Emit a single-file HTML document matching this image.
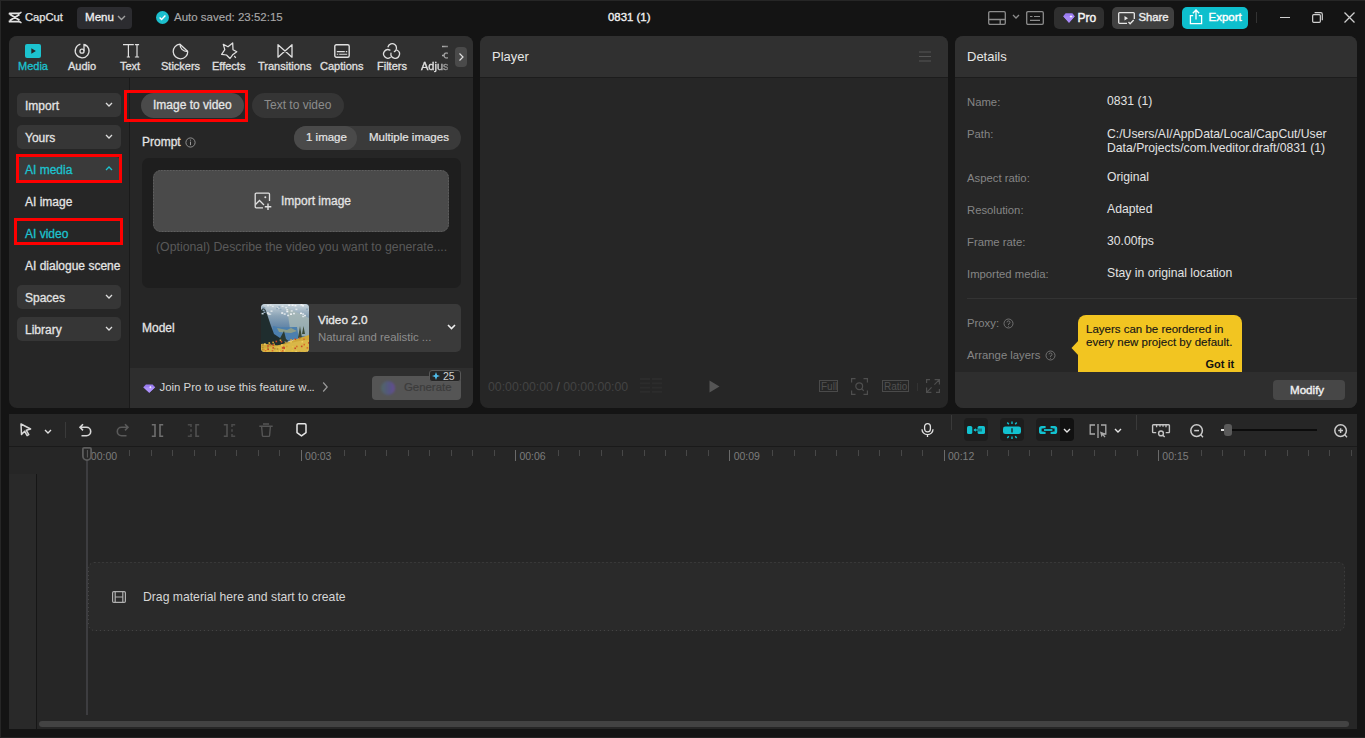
<!DOCTYPE html>
<html><head><meta charset="utf-8">
<style>
*{margin:0;padding:0;box-sizing:border-box}
html,body{width:1365px;height:738px;overflow:hidden;background:#141414;font-family:"Liberation Sans",sans-serif;color:#e6e6e6;font-size:12px}
.a{position:absolute}
.t{position:absolute;white-space:nowrap;line-height:1}
.panel{position:absolute;background:#262626;border-radius:8px;overflow:hidden}
.hdr{position:absolute;left:0;right:0;top:0;height:42px;background:#303030;border-bottom:1px solid #1c1c1c}
.btn{position:absolute;background:#363636;border-radius:5px}
.chev{position:absolute;width:5px;height:5px;border-right:1.5px solid #ddd;border-bottom:1.5px solid #ddd;transform:rotate(45deg)}
.red{position:absolute;border:3px solid #fe0000}
.lbl{color:#8a8a8a}
.sb{font-size:12px;color:#e4e4e4;-webkit-text-stroke:0.28px #e4e4e4}
.sb.on{color:#1cc3cf;-webkit-text-stroke:0.28px #1cc3cf}
.dl{font-size:11.3px;color:#858585}
.dv{font-size:12.2px;color:#e2e2e2}
.tab{font-size:11px;color:#e0e0e0;-webkit-text-stroke:0.3px #e0e0e0}
.tab.on{color:#1cc3cf;-webkit-text-stroke:0.3px #1cc3cf}
svg{position:absolute;overflow:visible}
</style></head><body>
<!-- window border -->
<div class="a" style="left:0;top:0;width:1365px;height:1px;background:#262626"></div>
<div class="a" style="left:0;top:0;width:1px;height:738px;background:#262626"></div>
<div class="a" style="left:0;top:737px;width:1365px;height:1px;background:#232323"></div>

<!-- ===== TOP BAR ===== -->
<div id="top">
  <!-- logo -->
  <svg style="left:8.3px;top:10.6px" width="15" height="13" viewBox="0 0 16 14">
    <path d="M1.6 3.8V2.5h10.8M1.6 10.2v1.3h10.8M1.9 3.6l10.4 6.4M12.3 3.8L1.9 10.2" fill="none" stroke="#e2e2e2" stroke-width="1.9" stroke-linejoin="round"/>
    <path d="M12.2 2.5c.8 0 1.3-.4 1.7-1M12.2 11.5c.8 0 1.3.4 1.7 1" fill="none" stroke="#e2e2e2" stroke-width="1.6" stroke-linecap="round"/>
  </svg>
  <div class="t" style="left:25px;top:11.6px;font-size:11.2px;color:#e4e4e4;-webkit-text-stroke:0.25px #e4e4e4;letter-spacing:0px">CapCut</div>
  <div class="btn" style="left:77px;top:7px;width:55px;height:22px;background:#2c2c30;border-radius:4px"></div>
  <div class="t" style="left:85px;top:11px;font-size:11.6px;color:#f0f0f0;-webkit-text-stroke:0.3px #f0f0f0">Menu</div>
  <svg style="left:117px;top:15px" width="9" height="6"><path d="M1 1l3.5 3.5L8 1" fill="none" stroke="#a0a0a0" stroke-width="1.4"/></svg>
  <!-- auto saved -->
  <div class="a" style="left:156px;top:11px;width:13px;height:13px;border-radius:50%;background:#1cbfcd"></div>
  <svg style="left:156px;top:11px" width="13" height="13"><path d="M3.6 6.6l2 2 3.8-4" fill="none" stroke="#fff" stroke-width="1.4"/></svg>
  <div class="t" style="left:174px;top:12.2px;font-size:11.5px;color:#a8a8a8;-webkit-text-stroke:0.15px #a8a8a8">Auto saved: 23:52:15</div>
  <div class="t" style="left:608px;top:12.2px;font-size:11.4px;color:#f0f0f0;-webkit-text-stroke:0.35px #f0f0f0">0831 (1)</div>
  <!-- top right -->
  <svg style="left:988px;top:11px" width="18" height="14" viewBox="0 0 18 14"><rect x="0.7" y="0.7" width="16.6" height="12.6" rx="1.2" fill="none" stroke="#8c8c8c" stroke-width="1.3"/><path d="M0.7 8.5h16.6M12.2 8.5v4.8" stroke="#8c8c8c" stroke-width="1.3"/></svg>
  <svg style="left:1012px;top:14px" width="8" height="5"><path d="M1 1l3 3 3-3" fill="none" stroke="#8c8c8c" stroke-width="1.3"/></svg>
  <svg style="left:1026px;top:11px" width="18" height="14" viewBox="0 0 18 14"><rect x="0.7" y="0.7" width="16.6" height="12.6" rx="1.2" fill="none" stroke="#8c8c8c" stroke-width="1.3"/><path d="M4 5.5h2.5M8 5.5h6M4 9.4h10" stroke="#8c8c8c" stroke-width="1.2"/></svg>
  <div class="a" style="left:1054px;top:7px;width:50px;height:22px;border-radius:5px;background:#2f2f2f"></div>
  <svg style="left:1063px;top:13px" width="12" height="10" viewBox="0 0 12 10"><path d="M2.6 0.3h6.8l2.4 3L6 9.7 0.2 3.3z" fill="#9b7df2"/><path d="M0.2 3.3h11.6L6 9.7z" fill="#a98af8"/><path d="M8 2l.5 1.1 1.1.4-1.1.5L8 5.1l-.5-1.1-1.1-.5 1.1-.4z" fill="#fff"/></svg>
  <div class="t" style="left:1077.5px;top:12px;font-size:12px;color:#f4f4f4;-webkit-text-stroke:0.45px #f4f4f4">Pro</div>
  <div class="a" style="left:1112px;top:7px;width:62px;height:22px;border-radius:5px;background:#404040"></div>
  <svg style="left:1118px;top:12px" width="17" height="13" viewBox="0 0 17 13"><path d="M9 11.3H1.6a.9.9 0 0 1-.9-.9V1.6a.9.9 0 0 1 .9-.9h13.8a.9.9 0 0 1 .9.9v5.4" fill="none" stroke="#e6e6e6" stroke-width="1.3"/><path d="M6.5 4v4.4L10 6.2z" fill="#e6e6e6"/><path d="M10.5 10l1.6 1.8 3.6-3.8" fill="none" stroke="#e6e6e6" stroke-width="1.3"/></svg>
  <div class="t" style="left:1138.5px;top:12px;font-size:11.3px;color:#ececec;-webkit-text-stroke:0.4px #ececec">Share</div>
  <div class="a" style="left:1182px;top:7px;width:66px;height:22px;border-radius:5px;background:#0ebfcd"></div>
  <svg style="left:1189px;top:9px" width="14" height="16" viewBox="0 0 14 16"><path d="M4.2 6.6H1.4v8h11.2v-8H9.8" fill="none" stroke="#fff" stroke-width="1.3"/><path d="M7 10.6V1.2M3.8 4.2L7 1l3.2 3.2" fill="none" stroke="#fff" stroke-width="1.3"/></svg>
  <div class="t" style="left:1208.5px;top:12px;font-size:11.5px;color:#fff;-webkit-text-stroke:0.4px #fff">Export</div>
  <div class="a" style="left:1256px;top:12px;width:1px;height:11px;background:#333"></div>
  <div class="a" style="left:1280px;top:17px;width:10px;height:1.3px;background:#cfcfcf"></div>
  <svg style="left:1312px;top:12px" width="11" height="11" viewBox="0 0 11 11"><rect x="0.65" y="2.65" width="7.7" height="7.7" rx="1" fill="none" stroke="#cfcfcf" stroke-width="1.2"/><path d="M2.6 0.65h6.2a1.5 1.5 0 0 1 1.5 1.5v6.2" fill="none" stroke="#cfcfcf" stroke-width="1.2"/></svg>
  <svg style="left:1344px;top:12px" width="11" height="11"><path d="M0.5 0.5l10 10M10.5 0.5l-10 10" stroke="#cfcfcf" stroke-width="1.3"/></svg>
</div>

<!-- ===== LEFT PANEL ===== -->
<div class="panel" style="left:9px;top:36px;width:464px;height:372px">
  <div class="hdr"></div>
</div>


<!-- left tab bar -->
<div id="tabs">
  <!-- Media -->
  <svg style="left:25px;top:44px" width="16" height="14" viewBox="0 0 16 14"><rect x="0" y="0" width="16" height="14" rx="2" fill="#1cc3cf"/><path d="M6.3 4.2v5.6l4.6-2.8z" fill="#262626"/></svg>
  <div class="t tab on" style="left:18px;top:61px">Media</div>
  <!-- Audio -->
  <svg style="left:74px;top:43px" width="16" height="16" viewBox="0 0 16 16"><path d="M10.2 1.3A6.9 6.9 0 1 1 6.4 1.2" fill="none" stroke="#e0e0e0" stroke-width="1.3"/><circle cx="8" cy="8.2" r="2" fill="none" stroke="#e0e0e0" stroke-width="1.3"/><path d="M10 8.2V1.6c.8.2 1.8.9 2.4 1.8" fill="none" stroke="#e0e0e0" stroke-width="1.3"/></svg>
  <div class="t tab" style="left:68px;top:61px">Audio</div>
  <!-- Text -->
  <svg style="left:123px;top:44px" width="17" height="14" viewBox="0 0 17 14"><path d="M0.6 1.3V0.7h9.6v0.6M5.4 0.7v12.3M3.8 13h3.2M11.9 0.7h4.2M14 0.7v12.3M11.9 13h4.2" fill="none" stroke="#e0e0e0" stroke-width="1.2"/></svg>
  <div class="t tab" style="left:120px;top:61px">Text</div>
  <!-- Stickers -->
  <svg style="left:172px;top:43px" width="17" height="17" viewBox="0 0 17 17"><path d="M15.8 8.5A7.3 7.3 0 1 1 8 1.2L15.8 8.5" fill="none" stroke="#e0e0e0" stroke-width="1.3" stroke-linejoin="round"/><path d="M8 1.2c0 4 2.6 7.3 7.8 7.3" fill="none" stroke="#e0e0e0" stroke-width="1.3"/></svg>
  <div class="t tab" style="left:161px;top:61px">Stickers</div>
  <!-- Effects -->
  <svg style="left:221px;top:42px" width="17" height="18" viewBox="0 0 17 18"><path d="M2.3 2.4L7 4.8 11.7 1 12 7.7 15.8 9.8 12 12.4 9 16.5 5.5 13 0.6 12.4 3.8 7.7z" fill="none" stroke="#e0e0e0" stroke-width="1.25" stroke-linejoin="round"/><path d="M13.3 14l1.5 1.8" stroke="#e0e0e0" stroke-width="1.2"/></svg>
  <div class="t tab" style="left:212px;top:61px">Effects</div>
  <!-- Transitions -->
  <svg style="left:277px;top:44px" width="16" height="14" viewBox="0 0 16 14"><path d="M1 0.8v12.4L15 0.8v12.4z" fill="none" stroke="#e0e0e0" stroke-width="1.3" stroke-linejoin="round"/></svg>
  <div class="t tab" style="left:258px;top:61px">Transitions</div>
  <!-- Captions -->
  <svg style="left:334px;top:44px" width="16" height="14" viewBox="0 0 16 14"><rect x="0.8" y="0.8" width="14.4" height="12.4" rx="1.5" fill="none" stroke="#e0e0e0" stroke-width="1.4"/><path d="M2.8 7.6h8M11.8 7.6h1.4M2.8 10.2h1.4M5.2 10.2h8" stroke="#e0e0e0" stroke-width="1.1"/></svg>
  <div class="t tab" style="left:320px;top:61px">Captions</div>
  <!-- Filters -->
  <svg style="left:380px;top:40px" width="24" height="22" viewBox="0 0 24 22"><path d="M8.05 6.79A4.3 4.3 0 1 1 14.35 11.62M9.92 10.10A4.3 4.3 0 1 0 10.24 17.51M10.97 13.25A4.3 4.3 0 1 0 17.22 10.20" fill="none" stroke="#e0e0e0" stroke-width="1.3" stroke-linecap="round"/></svg>
  <div class="t tab" style="left:377px;top:61px">Filters</div>
  <!-- Adjust (clipped) -->
  <div class="a" style="left:410px;top:40px;width:38px;height:36px;overflow:hidden;-webkit-mask-image:linear-gradient(90deg,#000 0%,#000 70%,rgba(0,0,0,.45) 100%)">
    <svg style="left:32px;top:4px" width="16" height="16" viewBox="0 0 16 16"><path d="M0 2.5h8M0 11.5h2" stroke="#e0e0e0" stroke-width="1.3"/><circle cx="4.6" cy="11.5" r="2.5" fill="none" stroke="#e0e0e0" stroke-width="1.3"/></svg>
    <div class="t tab" style="left:11px;top:21px">Adjust</div>
  </div>
  <div class="a" style="left:455px;top:47px;width:12px;height:20px;background:#4a4a4a;border-radius:4px"></div>
  <svg style="left:455px;top:47px" width="12" height="20"><path d="M4.5 6.5l3.5 3.5-3.5 3.5" fill="none" stroke="#e0e0e0" stroke-width="1.2"/></svg>
</div>
<div class="a" style="left:129px;top:78px;width:1px;height:330px;background:#1a1a1a"></div>


<!-- sidebar -->
<div class="btn" style="left:17px;top:93px;width:104px;height:24px"></div>
<div class="t sb" style="left:25px;top:99.8px;font-size:12px">Import</div>
<svg style="left:105px;top:102px" width="8" height="5"><path d="M1 1l3 3 3-3" fill="none" stroke="#ddd" stroke-width="1.3"/></svg>
<div class="btn" style="left:17px;top:125px;width:104px;height:24px"></div>
<div class="t sb" style="left:25px;top:131.8px;font-size:12px">Yours</div>
<svg style="left:105px;top:134px" width="8" height="5"><path d="M1 1l3 3 3-3" fill="none" stroke="#ddd" stroke-width="1.3"/></svg>
<div class="btn" style="left:17px;top:157px;width:104px;height:24px;background:#3a3a3a"></div>
<div class="t sb on" style="left:25px;top:163.8px;font-size:12px">AI media</div>
<svg style="left:105px;top:166px" width="8" height="5"><path d="M1 4l3-3 3 3" fill="none" stroke="#1cc3cf" stroke-width="1.3"/></svg>
<div class="red" style="left:16px;top:154px;width:106px;height:29px"></div>
<div class="t sb" style="left:25px;top:195.8px;font-size:12px">AI image</div>
<div class="t sb on" style="left:25px;top:227.8px;font-size:12px">AI video</div>
<div class="red" style="left:14px;top:218px;width:109px;height:27px"></div>
<div class="t sb" style="left:25px;top:259.8px;font-size:12px">AI dialogue scene</div>
<div class="btn" style="left:17px;top:285px;width:104px;height:24px"></div>
<div class="t sb" style="left:25px;top:291.8px;font-size:12px">Spaces</div>
<svg style="left:105px;top:294px" width="8" height="5"><path d="M1 1l3 3 3-3" fill="none" stroke="#ddd" stroke-width="1.3"/></svg>
<div class="btn" style="left:17px;top:317px;width:104px;height:24px"></div>
<div class="t sb" style="left:25px;top:323.8px;font-size:12px">Library</div>
<svg style="left:105px;top:326px" width="8" height="5"><path d="M1 1l3 3 3-3" fill="none" stroke="#ddd" stroke-width="1.3"/></svg>

<!-- AI video content -->
<div class="a" style="left:141px;top:93px;width:103px;height:25px;border-radius:13px;background:#4a4a4a"></div>
<div class="t sb" style="left:153px;top:99px;color:#e8e8e8">Image to video</div>
<div class="red" style="left:124px;top:90px;width:124px;height:32px"></div>
<div class="a" style="left:252px;top:93px;width:92px;height:25px;border-radius:13px;background:#353535"></div>
<div class="t sb" style="left:264px;top:99px;color:#8c8c8c;-webkit-text-stroke:0">Text to video</div>

<div class="t sb" style="left:142px;top:136px">Prompt</div>
<svg style="left:185px;top:136.5px" width="11" height="11"><circle cx="5.5" cy="5.5" r="4.6" fill="none" stroke="#9a9a9a" stroke-width="0.9"/><path d="M5.5 4.6v3.6" stroke="#9a9a9a" stroke-width="1"/><circle cx="5.5" cy="3.1" r="0.6" fill="#9a9a9a"/></svg>

<div class="a" style="left:294px;top:126px;width:167px;height:24px;border-radius:12px;background:#3a3a3a"></div>
<div class="a" style="left:294px;top:126px;width:63px;height:24px;border-radius:12px;background:#4a4a4a"></div>
<div class="t sb" style="left:306px;top:132px;font-size:11.5px;-webkit-text-stroke:0.2px #e4e4e4">1 image</div>
<div class="t sb" style="left:369px;top:132px;font-size:11.5px;-webkit-text-stroke:0.2px #e4e4e4">Multiple images</div>

<div class="a" style="left:142px;top:158px;width:319px;height:130px;border-radius:7px;background:#1e1e1e"></div>
<div class="a" style="left:153px;top:170px;width:296px;height:62px;border-radius:8px;background:#4a4a4a"></div>
<svg style="left:153px;top:170px" width="296" height="62"><rect x="0.5" y="0.5" width="295" height="61" rx="7.5" fill="none" stroke="#5e5e5e" stroke-width="1" stroke-dasharray="1.6 1.4"/></svg>
<svg style="left:254px;top:192px" width="19" height="19" viewBox="0 0 19 19"><path d="M15.5 9V2.2a1 1 0 0 0-1-1H2.2a1 1 0 0 0-1 1v12.6a1 1 0 0 0 1 1H9" fill="none" stroke="#e0e0e0" stroke-width="1.3"/><circle cx="11.3" cy="5.2" r="1" fill="#e0e0e0"/><path d="M1.5 12.5l4-4 4.5 4.5" fill="none" stroke="#e0e0e0" stroke-width="1.3"/><path d="M14 11.5v6.5M10.8 14.7h6.5" stroke="#e0e0e0" stroke-width="1.4"/></svg>
<div class="t sb" style="left:281px;top:195px">Import image</div>
<div class="t" style="left:156px;top:241px;font-size:12.3px;color:#595959">(Optional) Describe the video you want to generate....</div>

<div class="t sb" style="left:142px;top:322px">Model</div>
<div class="a" style="left:261px;top:304px;width:200px;height:48px;border-radius:5px;background:#3a3a3a"></div>
<div class="a" style="left:261px;top:304px;width:48px;height:48px;border-radius:4px;overflow:hidden;background:#5b7c98">
  <svg style="left:0;top:0" width="48" height="48" viewBox="0 0 48 48">
    <defs><linearGradient id="sky" x1="0" y1="0" x2="0" y2="1"><stop offset="0" stop-color="#c9d5dc"/><stop offset="0.25" stop-color="#8aa3b6"/><stop offset="0.6" stop-color="#4f77a0"/><stop offset="1" stop-color="#3d6a96"/></linearGradient></defs>
    <rect width="48" height="48" fill="url(#sky)"/>
    <path d="M26 4l22 10v18H30z" fill="#a9b9b6" opacity=".75"/>
    <path d="M12 22c6 2 14 1 24 1l2 12-26 2z" fill="#4c7fae"/>
    <path d="M16 24l10 2 4-2 6 3-6 2-12-1z" fill="#b8b070" opacity=".6"/>
    <path d="M0 48V6l3-3 2 4 2 6 3 9 3 8 6 4 7 6 2 3-6 6z" fill="#1f2d2e"/>
    <path d="M18 36l5-9 2 8 5 4z" fill="#2b3a32"/>
    <path d="M37 34l2-12 2 12zM41 30l1.5-8 1.5 8z" fill="#3a4a38"/>
    <path d="M26 38c4-2 8-3 10-2l-2 3z" fill="#dde4e6"/>
    <path d="M0 48V40c6-1 12 2 18 1 8-2 16-6 30-10v17z" fill="#cfa83a"/>
    <path d="M0 48v-4c8 0 16-2 26-4 8-2 14-4 22-4v12z" fill="#d9b748"/>
    <rect x="11.4" y="43.1" width="1.6" height="1.6" fill="#c84a2a"/><rect x="44.0" y="40.1" width="1.6" height="1.6" fill="#e8c040"/><rect x="3.1" y="39.3" width="1.6" height="1.6" fill="#f0d060"/><rect x="12.4" y="39.5" width="1.6" height="1.6" fill="#b89030"/><rect x="22.6" y="45.8" width="1.6" height="1.6" fill="#f0d060"/><rect x="19.1" y="46.2" width="1.6" height="1.6" fill="#d86a2a"/><rect x="30.5" y="46.0" width="1.6" height="1.6" fill="#e8c040"/><rect x="18.7" y="35.5" width="1.6" height="1.6" fill="#e0a030"/><rect x="7.7" y="47.6" width="1.6" height="1.6" fill="#e0a030"/><rect x="14.5" y="36.7" width="1.6" height="1.6" fill="#c84a2a"/><rect x="22.7" y="44.2" width="1.6" height="1.6" fill="#f0d060"/><rect x="34.3" y="46.8" width="1.6" height="1.6" fill="#f0d060"/><rect x="35.0" y="41.7" width="1.6" height="1.6" fill="#d86a2a"/><rect x="42.2" y="34.5" width="1.6" height="1.6" fill="#d86a2a"/><rect x="23.8" y="37.7" width="1.6" height="1.6" fill="#b89030"/><rect x="20.9" y="43.1" width="1.6" height="1.6" fill="#c84a2a"/><rect x="20.2" y="45.8" width="1.6" height="1.6" fill="#e8c040"/><rect x="16.8" y="42.9" width="1.6" height="1.6" fill="#e8c040"/><rect x="11.2" y="40.8" width="1.6" height="1.6" fill="#e0a030"/><rect x="41.1" y="47.9" width="1.6" height="1.6" fill="#b89030"/><rect x="33.4" y="43.5" width="1.6" height="1.6" fill="#c84a2a"/><rect x="46.3" y="46.6" width="1.6" height="1.6" fill="#e8c040"/><rect x="5.0" y="44.8" width="1.6" height="1.6" fill="#b89030"/><rect x="39.9" y="41.6" width="1.6" height="1.6" fill="#c84a2a"/><rect x="6.0" y="43.1" width="1.6" height="1.6" fill="#b89030"/><rect x="47.5" y="34.3" width="1.6" height="1.6" fill="#e0a030"/><rect x="19.7" y="37.0" width="1.6" height="1.6" fill="#c84a2a"/><rect x="20.5" y="40.3" width="1.6" height="1.6" fill="#e0a030"/><rect x="2.1" y="44.7" width="1.6" height="1.6" fill="#e0a030"/><rect x="18.1" y="42.8" width="1.6" height="1.6" fill="#e8c040"/><rect x="42.3" y="47.7" width="1.6" height="1.6" fill="#e8c040"/><rect x="11.3" y="37.6" width="1.6" height="1.6" fill="#e0a030"/><rect x="3.7" y="44.4" width="1.6" height="1.6" fill="#e0a030"/><rect x="45.5" y="47.6" width="1.6" height="1.6" fill="#c84a2a"/><rect x="29.3" y="35.1" width="1.6" height="1.6" fill="#e0a030"/><rect x="47.0" y="38.1" width="1.6" height="1.6" fill="#c84a2a"/><rect x="46.0" y="46.4" width="1.6" height="1.6" fill="#f0d060"/><rect x="18.1" y="46.4" width="1.6" height="1.6" fill="#f0d060"/><rect x="30.9" y="41.9" width="1.6" height="1.6" fill="#e8c040"/><rect x="4.9" y="47.7" width="1.6" height="1.6" fill="#e8c040"/><rect x="13.0" y="43.9" width="1.6" height="1.6" fill="#b89030"/><rect x="11.4" y="40.4" width="1.6" height="1.6" fill="#c84a2a"/><rect x="25.0" y="41.6" width="1.6" height="1.6" fill="#e0a030"/><rect x="37.8" y="47.8" width="1.6" height="1.6" fill="#c84a2a"/><rect x="1.0" y="44.8" width="1.6" height="1.6" fill="#b89030"/><rect x="6.4" y="44.5" width="1.6" height="1.6" fill="#c84a2a"/><rect x="22.4" y="43.6" width="1.6" height="1.6" fill="#c84a2a"/><rect x="29.2" y="37.0" width="1.6" height="1.6" fill="#f0d060"/><rect x="1.1" y="40.2" width="1.6" height="1.6" fill="#b89030"/><rect x="1.0" y="42.8" width="1.6" height="1.6" fill="#b89030"/><rect x="21.9" y="42.5" width="1.6" height="1.6" fill="#c84a2a"/><rect x="8.5" y="39.7" width="1.6" height="1.6" fill="#c84a2a"/><rect x="40.5" y="37.0" width="1.6" height="1.6" fill="#f0d060"/><rect x="5.0" y="46.3" width="1.6" height="1.6" fill="#e8c040"/><rect x="32.8" y="35.0" width="1.6" height="1.6" fill="#e8c040"/><rect x="10.7" y="45.9" width="1.6" height="1.6" fill="#d86a2a"/><rect x="15.7" y="44.2" width="1.6" height="1.6" fill="#b89030"/><rect x="33.5" y="34.5" width="1.6" height="1.6" fill="#c84a2a"/><rect x="45.6" y="43.1" width="1.6" height="1.6" fill="#d86a2a"/><rect x="21.0" y="46.1" width="1.6" height="1.6" fill="#d86a2a"/><rect x="3.8" y="45.7" width="1.6" height="1.6" fill="#d86a2a"/><rect x="42.5" y="39.8" width="1.6" height="1.6" fill="#d86a2a"/><rect x="37.8" y="33.5" width="1.6" height="1.6" fill="#d86a2a"/><rect x="15.1" y="46.1" width="1.6" height="1.6" fill="#e8c040"/><rect x="8.8" y="40.6" width="1.6" height="1.6" fill="#b89030"/><rect x="4.1" y="44.6" width="1.6" height="1.6" fill="#e8c040"/><rect x="6.2" y="41.2" width="1.6" height="1.6" fill="#c84a2a"/><rect x="22.3" y="43.0" width="1.6" height="1.6" fill="#c84a2a"/><rect x="20.1" y="40.3" width="1.6" height="1.6" fill="#f0d060"/><rect x="7.5" y="38.2" width="1.6" height="1.6" fill="#e8c040"/><rect x="47.4" y="5.2" width="2" height="1.5" fill="#c9d6de"/><rect x="1.6" y="5.5" width="2" height="1.5" fill="#8fa8bc"/><rect x="26.1" y="10.7" width="2" height="1.5" fill="#dfe6ea"/><rect x="41.2" y="11.7" width="2" height="1.5" fill="#dfe6ea"/><rect x="38.9" y="0.5" width="2" height="1.5" fill="#c9d6de"/><rect x="43.0" y="10.8" width="2" height="1.5" fill="#dfe6ea"/><rect x="0.6" y="8.9" width="2" height="1.5" fill="#c9d6de"/><rect x="24.2" y="2.9" width="2" height="1.5" fill="#dfe6ea"/><rect x="25.2" y="5.0" width="2" height="1.5" fill="#dfe6ea"/><rect x="16.4" y="3.0" width="2" height="1.5" fill="#f2f4f5"/><rect x="39.0" y="0.7" width="2" height="1.5" fill="#c9d6de"/><rect x="9.5" y="6.4" width="2" height="1.5" fill="#dfe6ea"/><rect x="8.2" y="9.5" width="2" height="1.5" fill="#c9d6de"/><rect x="39.5" y="0.1" width="2" height="1.5" fill="#f2f4f5"/><rect x="2.4" y="3.3" width="2" height="1.5" fill="#8fa8bc"/><rect x="29.7" y="6.2" width="2" height="1.5" fill="#dfe6ea"/><rect x="22.7" y="9.3" width="2" height="1.5" fill="#dfe6ea"/><rect x="41.1" y="9.3" width="2" height="1.5" fill="#dfe6ea"/><rect x="6.0" y="0.8" width="2" height="1.5" fill="#dfe6ea"/><rect x="41.0" y="1.0" width="2" height="1.5" fill="#f2f4f5"/><rect x="15.2" y="3.8" width="2" height="1.5" fill="#8fa8bc"/><rect x="18.5" y="4.7" width="2" height="1.5" fill="#8fa8bc"/><rect x="17.3" y="2.3" width="2" height="1.5" fill="#8fa8bc"/><rect x="20.6" y="1.5" width="2" height="1.5" fill="#dfe6ea"/><rect x="34.4" y="4.6" width="2" height="1.5" fill="#dfe6ea"/><rect x="27.2" y="0.5" width="2" height="1.5" fill="#f2f4f5"/><rect x="29.0" y="9.4" width="2" height="1.5" fill="#f2f4f5"/><rect x="30.6" y="0.5" width="2" height="1.5" fill="#f2f4f5"/><rect x="2.5" y="7.5" width="2" height="1.5" fill="#8fa8bc"/><rect x="20.2" y="8.3" width="2" height="1.5" fill="#f2f4f5"/><rect x="0.9" y="2.6" width="2" height="1.5" fill="#8fa8bc"/><rect x="33.4" y="0.9" width="2" height="1.5" fill="#f2f4f5"/><rect x="10.8" y="1.6" width="2" height="1.5" fill="#dfe6ea"/><rect x="45.0" y="4.5" width="2" height="1.5" fill="#8fa8bc"/><rect x="5.8" y="8.3" width="2" height="1.5" fill="#f2f4f5"/><rect x="32.0" y="8.8" width="2" height="1.5" fill="#dfe6ea"/><rect x="39.0" y="8.6" width="2" height="1.5" fill="#f2f4f5"/><rect x="6.9" y="9.3" width="2" height="1.5" fill="#dfe6ea"/><rect x="25.3" y="6.8" width="2" height="1.5" fill="#f2f4f5"/><rect x="8.6" y="0.3" width="2" height="1.5" fill="#dfe6ea"/>
  </svg>
</div>
<div class="t sb" style="left:318px;top:314.5px;font-size:11.8px;-webkit-text-stroke:0.35px #e8e8e8;color:#e8e8e8">Video 2.0</div>
<div class="t" style="left:318px;top:332px;font-size:11.4px;color:#8e8e8e">Natural and realistic ...</div>
<svg style="left:447px;top:324px" width="9" height="6"><path d="M1 1l3.5 3.5L8 1" fill="none" stroke="#eee" stroke-width="1.6"/></svg>

<div class="a" style="left:130px;top:368px;width:343px;height:40px;background:#2e2e2e;border-bottom-right-radius:8px"></div>
<svg style="left:142.5px;top:383.5px" width="12.5" height="9" viewBox="0 0 13 9"><path d="M3 0.3h7l2.7 2.8L6.5 8.8 0.3 3.1z" fill="#9a7cf0"/><path d="M0.3 3.1h12.4L6.5 8.8z" fill="#ad92fa"/><path d="M7.6 1.6l.5 1 1 .4-1 .4-.5 1-.5-1-1-.4 1-.4z" fill="#fff"/></svg>
<div class="t" style="left:159.5px;top:382px;font-size:11.4px;color:#d8d8d8">Join Pro to use this feature w<span style="letter-spacing:-0.6px">...</span></div>
<svg style="left:322px;top:381px" width="7" height="12"><path d="M1.2 1.5l4 4.5-4 4.5" fill="none" stroke="#999" stroke-width="1.2"/></svg>
<div class="a" style="left:372px;top:376px;width:89px;height:24px;border-radius:4px;background:#555"></div>
<div class="a" style="left:381px;top:381px;width:14px;height:14px;border-radius:50%;background:linear-gradient(90deg,#4f6a6a 0%,#55558a 60%,#6a4aa0 100%);filter:blur(1px);opacity:.85"></div>
<div class="t" style="left:404px;top:382px;font-size:11.4px;color:#3c3c3c;-webkit-text-stroke:0.2px #3c3c3c">Generate</div>
<div class="a" style="left:429px;top:370px;width:32px;height:12px;border-radius:3px;background:#262626;border:1px solid #585858"></div>
<svg style="left:431.5px;top:372px" width="8" height="8" viewBox="0 0 8 8"><path d="M4 0l1.1 2.9L8 4 5.1 5.1 4 8 2.9 5.1 0 4l2.9-1.1z" fill="#4fbcea"/></svg>
<div class="t" style="left:443px;top:371px;font-size:10.5px;color:#d0d0d0">25</div>

<!-- ===== PLAYER ===== -->
<div class="panel" style="left:480px;top:36px;width:468px;height:372px">
  <div class="hdr"></div>
  <div class="t" style="left:12px;top:14px;font-size:13px;color:#e6e6e6">Player</div>
  <svg style="left:439px;top:15px" width="12" height="11"><path d="M0 1h12M0 5.5h12M0 10h12" stroke="#555" stroke-width="1.1"/></svg>
  <div class="t" style="left:8px;top:345px;font-size:12.3px;color:#434343">00:00:00:00 <span style="color:#555">/</span> 00:00:00:00</div>
  <svg style="left:160px;top:342px" width="22" height="15"><g fill="#2c2c2c"><rect x="0" y="0" width="10" height="2"/><rect x="12" y="0" width="10" height="2"/><rect x="0" y="4.3" width="10" height="2"/><rect x="12" y="4.3" width="10" height="2"/><rect x="0" y="8.6" width="10" height="2"/><rect x="12" y="8.6" width="10" height="2"/><rect x="0" y="12.9" width="10" height="2"/><rect x="12" y="12.9" width="10" height="2"/></g></svg>
  <svg style="left:229px;top:344px" width="11" height="13"><path d="M0.5 0.5v12l10-6z" fill="#555"/></svg>
  <div class="a" style="left:339px;top:344px;width:19px;height:12px;border:1px solid #4a4a4a"></div>
  <div class="t" style="left:341px;top:346px;font-size:10px;color:#505050">Full</div>
  <svg style="left:371px;top:342px" width="17" height="17" viewBox="0 0 17 17"><path d="M0.6 4.5V0.6h3.9M12.5 0.6h3.9v3.9M16.4 12.5v3.9h-3.9M4.5 16.4H0.6v-3.9" fill="none" stroke="#4e4e4e" stroke-width="1.2"/><circle cx="8.2" cy="8.2" r="3.4" fill="none" stroke="#4e4e4e" stroke-width="1.2"/><path d="M10.6 10.6l2.2 2.2" stroke="#4e4e4e" stroke-width="1.2"/></svg>
  <div class="a" style="left:402px;top:344px;width:27px;height:12px;border:1px solid #4a4a4a"></div>
  <div class="t" style="left:404px;top:346px;font-size:10px;color:#505050">Ratio</div>
  <div class="a" style="left:437px;top:347px;width:1px;height:8px;background:#333"></div>
  <svg style="left:446px;top:343px" width="14" height="14" viewBox="0 0 14 14"><path d="M8.6 0.6h4.8v4.8M13.4 0.6L8.4 5.6M5.4 13.4H0.6V8.6M0.6 13.4l5-5M0.6 4V0.6H4M13.4 10v3.4H10" fill="none" stroke="#4e4e4e" stroke-width="1.2"/></svg>
</div>

<!-- ===== DETAILS ===== -->
<div class="panel" style="left:955px;top:36px;width:402px;height:372px">
  <div class="hdr"></div>
  <div class="t" style="left:12px;top:14px;font-size:13px;color:#e6e6e6">Details</div>
  <div class="t dl" style="left:12px;top:60.6px">Name:</div>
  <div class="t dv" style="left:152px;top:59px">0831 (1)</div>
  <div class="t dl" style="left:12px;top:92.6px">Path:</div>
  <div class="t dv" style="left:152px;top:91px;line-height:14px">C:/Users/AI/AppData/Local/CapCut/User<br>Data/Projects/com.lveditor.draft/0831 (1)</div>
  <div class="t dl" style="left:12px;top:136.6px">Aspect ratio:</div>
  <div class="t dv" style="left:152px;top:135px">Original</div>
  <div class="t dl" style="left:12px;top:168.6px">Resolution:</div>
  <div class="t dv" style="left:152px;top:167px">Adapted</div>
  <div class="t dl" style="left:12px;top:200.6px">Frame rate:</div>
  <div class="t dv" style="left:152px;top:199px">30.00fps</div>
  <div class="t dl" style="left:12px;top:232.6px">Imported media:</div>
  <div class="t dv" style="left:152px;top:231px">Stay in original location</div>
  <div class="a" style="left:12px;top:262px;width:390px;height:1px;background:#333"></div>
  <div class="t dl" style="left:12px;top:281.6px">Proxy:</div>
  <svg style="left:48px;top:282px" width="11" height="11"><circle cx="5.5" cy="5.5" r="4.5" fill="none" stroke="#777" stroke-width="0.9"/><path d="M4 4.3a1.5 1.5 0 1 1 1.5 1.6v1" fill="none" stroke="#777" stroke-width="0.9"/><circle cx="5.5" cy="8.2" r="0.5" fill="#777"/></svg>
  <div class="t dl" style="left:12px;top:313.6px">Arrange layers</div>
  <svg style="left:90px;top:314px" width="11" height="11"><circle cx="5.5" cy="5.5" r="4.5" fill="none" stroke="#777" stroke-width="0.9"/><path d="M4 4.3a1.5 1.5 0 1 1 1.5 1.6v1" fill="none" stroke="#777" stroke-width="0.9"/><circle cx="5.5" cy="8.2" r="0.5" fill="#777"/></svg>
  <!-- tooltip -->
  <div class="a" style="left:123px;top:279px;width:164px;height:70px;background:#f2c521;border-radius:8px"></div>
  <svg style="left:116px;top:304px" width="8" height="16"><path d="M8 0L0.5 8 8 16z" fill="#f2c521"/></svg>
  <div class="t" style="left:131px;top:287px;font-size:11.5px;color:#161616;line-height:13px;-webkit-text-stroke:0.15px #161616">Layers can be reordered in<br>every new project by default.</div>
  <div class="t" style="left:250.5px;top:322.6px;font-size:11px;font-weight:bold;color:#111">Got it</div>
  <!-- footer -->
  <div class="a" style="left:0;top:336px;width:402px;height:36px;background:#2e2e2e"></div>
  <div class="a" style="left:318px;top:344px;width:72px;height:20px;border-radius:4px;background:#474747"></div>
  <div class="t" style="left:335px;top:348px;font-size:11.6px;color:#f0f0f0;-webkit-text-stroke:0.4px #f0f0f0">Modify</div>
</div>

<!-- ===== TIMELINE ===== -->
<div class="panel" style="left:9px;top:414px;width:1348px;height:315px;border-radius:0;background:#262626">
  <!-- toolbar -->
  <div class="a" style="left:0;top:31.5px;width:1348px;height:1.5px;background:#1a1a1a"></div>
  <svg style="left:11px;top:9px" width="12" height="14" viewBox="0 0 12 14"><path d="M1 1l9.6 5-4.3 1.3 2.5 4.4-1.7.9-2.5-4.4L1.5 11.4z" fill="none" stroke="#d8d8d8" stroke-width="1.5" stroke-linejoin="round"/></svg>
  <svg style="left:35px;top:15px" width="8" height="5"><path d="M1 1l3 3 3-3" fill="none" stroke="#e0e0e0" stroke-width="1.4"/></svg>
  <div class="a" style="left:56px;top:8px;width:1px;height:16px;background:#3a3a3a"></div>
  <svg style="left:70px;top:9px" width="13" height="14" viewBox="0 0 13 14"><path d="M4 1.2L1 4.3l3 3.1M1.2 4.3h6.3a4.2 4.2 0 0 1 0 8.4H2.5" fill="none" stroke="#d8d8d8" stroke-width="1.6"/></svg>
  <svg style="left:107px;top:9px" width="13" height="14" viewBox="0 0 13 14"><path d="M9 1.2l3 3.1-3 3.1M11.8 4.3H5.5a4.2 4.2 0 0 0 0 8.4h5" fill="none" stroke="#5a5a5a" stroke-width="1.6"/></svg>
  <svg style="left:142px;top:10px" width="13" height="13" viewBox="0 0 13 13"><path d="M0.8 0.8H4v11.4H0.8M12.2 0.8H9v11.4h3.2" fill="none" stroke="#6e6e6e" stroke-width="1.6"/></svg>
  <svg style="left:178px;top:10px" width="13" height="13" viewBox="0 0 13 13"><path d="M0.8 0.8H4V3M4 5.3v2.4M4 10v2.2H0.8" fill="none" stroke="#4a4a4a" stroke-width="1.6"/><path d="M12.2 0.8H9v11.4h3.2" fill="none" stroke="#505050" stroke-width="1.6"/></svg>
  <svg style="left:214px;top:10px" width="13" height="13" viewBox="0 0 13 13"><path d="M0.8 0.8H4v11.4H0.8" fill="none" stroke="#505050" stroke-width="1.6"/><path d="M12.2 0.8H9V3M9 5.3v2.4M9 10v2.2h3.2" fill="none" stroke="#4a4a4a" stroke-width="1.6"/></svg>
  <svg style="left:250px;top:9px" width="14" height="14" viewBox="0 0 14 14"><path d="M0.3 3.3h13.4M4 1h6" fill="none" stroke="#555" stroke-width="1.4"/><path d="M2.6 3.5l0.8 9a1 1 0 0 0 1 .9h5.2a1 1 0 0 0 1-.9l.8-9" fill="none" stroke="#555" stroke-width="1.4"/></svg>
  <svg style="left:287px;top:9px" width="12" height="14" viewBox="0 0 12 14"><path d="M1 2a1.2 1.2 0 0 1 1.2-1.2h6.6A1.2 1.2 0 0 1 10 2v7.7L5.5 12.9 1 9.7z" fill="none" stroke="#e6e6e6" stroke-width="1.5" stroke-linejoin="round"/></svg>

  <svg style="left:912px;top:9px" width="13" height="14" viewBox="0 0 13 14"><rect x="3.6" y="0.7" width="5.8" height="8.2" rx="2.9" fill="none" stroke="#e0e0e0" stroke-width="1.3"/><path d="M1 6.2a5.5 5.5 0 0 0 11 0M6.5 11.7v2.3" fill="none" stroke="#e0e0e0" stroke-width="1.3"/></svg>
  <div class="a" style="left:942px;top:1px;width:1px;height:15px;background:#3a3a3a"></div>
  <div class="a" style="left:955px;top:4px;width:24px;height:23px;border-radius:4px;background:#1d1d1d"></div>
  <svg style="left:958px;top:12px" width="18" height="8" viewBox="0 0 18 8"><rect x="0" y="0" width="5.3" height="8" rx="1.6" fill="#12c2d0"/><rect x="10.6" y="0" width="7.4" height="8" rx="1.6" fill="#12c2d0"/><rect x="10.6" y="2.8" width="4.4" height="2.4" fill="#1d1d1d"/><path d="M7 4h8" stroke="#12c2d0" stroke-width="1.2"/><path d="M6.3 4l2.6-1.8v3.6z" fill="#12c2d0"/></svg>
  <div class="a" style="left:991px;top:4px;width:24px;height:23px;border-radius:4px;background:#1d1d1d"></div>
  <svg style="left:993px;top:7px" width="20" height="18" viewBox="0 0 20 18"><rect x="1" y="5.5" width="18" height="7.5" rx="2.3" fill="#12c2d0"/><path d="M10 7.2v4.2" stroke="#1d1d1d" stroke-width="1.3"/><path d="M10 0.5v2.6M10 15.4V18M5.3 1.5l1.5 1.8M14.7 1.5l-1.5 1.8M5.3 17l1.5-1.8M14.7 17l-1.5-1.8" stroke="#12c2d0" stroke-width="1.4"/></svg>
  <div class="a" style="left:1027px;top:4px;width:38px;height:23px;border-radius:4px;background:#1d1d1d"></div>
  <div class="a" style="left:1051px;top:4px;width:14px;height:23px;border-radius:0 4px 4px 0;background:#111"></div>
  <svg style="left:1030px;top:12px" width="19" height="8" viewBox="0 0 19 8"><path d="M6.6 1.3H2.6a1.3 1.3 0 0 0-1.3 1.3v2.8a1.3 1.3 0 0 0 1.3 1.3h4M11.6 1.3h4a1.3 1.3 0 0 1 1.3 1.3v2.8a1.3 1.3 0 0 1-1.3 1.3h-4" fill="none" stroke="#12c2d0" stroke-width="2.6"/><path d="M4.6 4h9.2" stroke="#1d1d1d" stroke-width="3.2"/><path d="M5 4h8.4" stroke="#12c2d0" stroke-width="1.8"/></svg>
  <svg style="left:1054px;top:14px" width="8" height="5"><path d="M1 1l3 3 3-3" fill="none" stroke="#e6e6e6" stroke-width="1.4"/></svg>
  <svg style="left:1080px;top:10px" width="19" height="15" viewBox="0 0 19 15"><path d="M6 1H1.2v9H6M12 1h4.8v9H15" fill="none" stroke="#aaa" stroke-width="1.3"/><path d="M9 0v14" stroke="#aaa" stroke-width="1.3"/><path d="M11 7.5l6 2.3-2.3.7 1.8 2.2-1 .8-1.8-2.2-1.2 2z" fill="#aaa"/></svg>
  <svg style="left:1105px;top:14px" width="8" height="5"><path d="M1 1l3 3 3-3" fill="none" stroke="#e6e6e6" stroke-width="1.4"/></svg>
  <div class="a" style="left:1127px;top:1px;width:1px;height:15px;background:#3a3a3a"></div>
  <svg style="left:1143px;top:10px" width="19" height="14" viewBox="0 0 19 14"><path d="M4.2 8.6H1.3a.7.7 0 0 1-.7-.7V1.4a.7.7 0 0 1 .7-.7h15.4a.7.7 0 0 1 .7.7v6.5a.7.7 0 0 1-.7.7h-3" fill="none" stroke="#c4c4c4" stroke-width="1.4"/><path d="M4.6 0.7v2.6M8 0.7v2M11 0.7v2M14 0.7v2.6" stroke="#c4c4c4" stroke-width="1.3"/><circle cx="9" cy="9.4" r="2.4" fill="none" stroke="#c4c4c4" stroke-width="1.4"/><path d="M10.8 11.2l1.9 1.9" stroke="#c4c4c4" stroke-width="1.4"/></svg>
  <svg style="left:1181px;top:10px" width="15" height="14" viewBox="0 0 15 14"><circle cx="6.6" cy="6.6" r="5.8" fill="none" stroke="#ccc" stroke-width="1.5"/><path d="M4.2 6.6h4.8" stroke="#ccc" stroke-width="1.5"/><path d="M10.8 10.8l2.2 2.4" stroke="#ccc" stroke-width="1.3"/></svg>
  <div class="a" style="left:1212px;top:15px;width:96px;height:2px;background:#0c0c0c"></div>
  <div class="a" style="left:1212px;top:15px;width:4px;height:2px;background:#ddd"></div>
  <div class="a" style="left:1215px;top:10px;width:8px;height:12px;border-radius:3px;background:#5a5a5a"></div>
  <svg style="left:1325px;top:10px" width="15" height="14" viewBox="0 0 15 14"><circle cx="6.6" cy="6.6" r="5.8" fill="none" stroke="#ccc" stroke-width="1.5"/><path d="M4.2 6.6h4.8M6.6 4.2V9" stroke="#ccc" stroke-width="1.5"/><path d="M10.8 10.8l2.2 2.4" stroke="#ccc" stroke-width="1.3"/></svg>

  <!-- ruler -->
  <div class="a" style="left:0;top:33px;width:1348px;height:282px;background:#262626"></div>
  <div class="a" style="left:0;top:60px;width:27px;height:255px;background:#292929"></div>
  <div class="a" style="left:27px;top:60px;width:1px;height:255px;background:#161616"></div>
  <div class="a" style="left:77.4px;top:36px;width:1px;height:11px;background:#6a6a6a"></div>
  <div class="t" style="left:81.8px;top:36.5px;font-size:10.5px;color:#7c7c7c">00:00</div>
  <div class="a" style="left:120.3px;top:36px;width:1px;height:6px;background:#474747"></div>
  <div class="a" style="left:141.7px;top:36px;width:1px;height:6px;background:#474747"></div>
  <div class="a" style="left:163.1px;top:36px;width:1px;height:6px;background:#474747"></div>
  <div class="a" style="left:184.6px;top:36px;width:1px;height:6px;background:#474747"></div>
  <div class="a" style="left:206.0px;top:36px;width:1px;height:6px;background:#474747"></div>
  <div class="a" style="left:227.4px;top:36px;width:1px;height:6px;background:#474747"></div>
  <div class="a" style="left:248.8px;top:36px;width:1px;height:6px;background:#474747"></div>
  <div class="a" style="left:270.3px;top:36px;width:1px;height:6px;background:#474747"></div>
  <div class="a" style="left:291.7px;top:36px;width:1px;height:11px;background:#6a6a6a"></div>
  <div class="t" style="left:296.1px;top:36.5px;font-size:10.5px;color:#7c7c7c">00:03</div>
  <div class="a" style="left:334.6px;top:36px;width:1px;height:6px;background:#474747"></div>
  <div class="a" style="left:356.0px;top:36px;width:1px;height:6px;background:#474747"></div>
  <div class="a" style="left:377.4px;top:36px;width:1px;height:6px;background:#474747"></div>
  <div class="a" style="left:398.8px;top:36px;width:1px;height:6px;background:#474747"></div>
  <div class="a" style="left:420.3px;top:36px;width:1px;height:6px;background:#474747"></div>
  <div class="a" style="left:441.7px;top:36px;width:1px;height:6px;background:#474747"></div>
  <div class="a" style="left:463.1px;top:36px;width:1px;height:6px;background:#474747"></div>
  <div class="a" style="left:484.6px;top:36px;width:1px;height:6px;background:#474747"></div>
  <div class="a" style="left:506.0px;top:36px;width:1px;height:11px;background:#6a6a6a"></div>
  <div class="t" style="left:510.4px;top:36.5px;font-size:10.5px;color:#7c7c7c">00:06</div>
  <div class="a" style="left:548.9px;top:36px;width:1px;height:6px;background:#474747"></div>
  <div class="a" style="left:570.3px;top:36px;width:1px;height:6px;background:#474747"></div>
  <div class="a" style="left:591.7px;top:36px;width:1px;height:6px;background:#474747"></div>
  <div class="a" style="left:613.1px;top:36px;width:1px;height:6px;background:#474747"></div>
  <div class="a" style="left:634.6px;top:36px;width:1px;height:6px;background:#474747"></div>
  <div class="a" style="left:656.0px;top:36px;width:1px;height:6px;background:#474747"></div>
  <div class="a" style="left:677.4px;top:36px;width:1px;height:6px;background:#474747"></div>
  <div class="a" style="left:698.9px;top:36px;width:1px;height:6px;background:#474747"></div>
  <div class="a" style="left:720.3px;top:36px;width:1px;height:11px;background:#6a6a6a"></div>
  <div class="t" style="left:724.7px;top:36.5px;font-size:10.5px;color:#7c7c7c">00:09</div>
  <div class="a" style="left:763.2px;top:36px;width:1px;height:6px;background:#474747"></div>
  <div class="a" style="left:784.6px;top:36px;width:1px;height:6px;background:#474747"></div>
  <div class="a" style="left:806.0px;top:36px;width:1px;height:6px;background:#474747"></div>
  <div class="a" style="left:827.4px;top:36px;width:1px;height:6px;background:#474747"></div>
  <div class="a" style="left:848.9px;top:36px;width:1px;height:6px;background:#474747"></div>
  <div class="a" style="left:870.3px;top:36px;width:1px;height:6px;background:#474747"></div>
  <div class="a" style="left:891.7px;top:36px;width:1px;height:6px;background:#474747"></div>
  <div class="a" style="left:913.2px;top:36px;width:1px;height:6px;background:#474747"></div>
  <div class="a" style="left:934.6px;top:36px;width:1px;height:11px;background:#6a6a6a"></div>
  <div class="t" style="left:939.0px;top:36.5px;font-size:10.5px;color:#7c7c7c">00:12</div>
  <div class="a" style="left:977.5px;top:36px;width:1px;height:6px;background:#474747"></div>
  <div class="a" style="left:998.9px;top:36px;width:1px;height:6px;background:#474747"></div>
  <div class="a" style="left:1020.3px;top:36px;width:1px;height:6px;background:#474747"></div>
  <div class="a" style="left:1041.8px;top:36px;width:1px;height:6px;background:#474747"></div>
  <div class="a" style="left:1063.2px;top:36px;width:1px;height:6px;background:#474747"></div>
  <div class="a" style="left:1084.6px;top:36px;width:1px;height:6px;background:#474747"></div>
  <div class="a" style="left:1106.0px;top:36px;width:1px;height:6px;background:#474747"></div>
  <div class="a" style="left:1127.5px;top:36px;width:1px;height:6px;background:#474747"></div>
  <div class="a" style="left:1148.9px;top:36px;width:1px;height:11px;background:#6a6a6a"></div>
  <div class="t" style="left:1153.3px;top:36.5px;font-size:10.5px;color:#7c7c7c">00:15</div>
  <div class="a" style="left:1191.8px;top:36px;width:1px;height:6px;background:#474747"></div>
  <div class="a" style="left:1213.2px;top:36px;width:1px;height:6px;background:#474747"></div>
  <div class="a" style="left:1234.6px;top:36px;width:1px;height:6px;background:#474747"></div>
  <div class="a" style="left:1256.1px;top:36px;width:1px;height:6px;background:#474747"></div>
  <div class="a" style="left:1277.5px;top:36px;width:1px;height:6px;background:#474747"></div>
  <div class="a" style="left:1298.9px;top:36px;width:1px;height:6px;background:#474747"></div>
  <div class="a" style="left:1320.3px;top:36px;width:1px;height:6px;background:#474747"></div>
  <div class="a" style="left:1341.8px;top:36px;width:1px;height:6px;background:#474747"></div>
  <!-- drop zone -->
  <div class="a" style="left:79px;top:148px;width:1257px;height:69px;border-radius:6px;background:#2a2a2a"></div>
  <svg style="left:79px;top:148px" width="1257" height="69"><rect x="0.5" y="0.5" width="1256" height="68" rx="6" fill="none" stroke="#474747" stroke-width="1" stroke-dasharray="1 3"/></svg>
  <svg style="left:103px;top:177px" width="14" height="12" viewBox="0 0 14 12"><rect x="0.6" y="0.6" width="12.8" height="10.8" rx="1.2" fill="none" stroke="#b0b0b0" stroke-width="1.2"/><path d="M3.2 0.6v10.8M10.8 0.6v10.8M3.2 6h7.6" stroke="#b0b0b0" stroke-width="1.2"/></svg>
  <div class="t" style="left:134px;top:177px;font-size:12.2px;color:#d6d6d6">Drag material here and start to create</div>
  <!-- playhead -->
  <div class="a" style="left:77px;top:46px;width:2px;height:255px;background:#3d3d40"></div>
  <svg style="left:73px;top:33px" width="10" height="14" viewBox="0 0 10 14"><path d="M0.9 2.1a1.2 1.2 0 0 1 1.2-1.2h5.8a1.2 1.2 0 0 1 1.2 1.2v6.9a4.1 4.1 0 0 1-8.2 0z" fill="#262626" stroke="#5c5c5c" stroke-width="1.8"/><path d="M5.4 3v7.5" stroke="#5c5c5c" stroke-width="1"/></svg>
  <!-- scrollbar -->
  <div class="a" style="left:30px;top:307px;width:1310px;height:6px;border-radius:3px;background:#434343"></div>
</div>

</body></html>
